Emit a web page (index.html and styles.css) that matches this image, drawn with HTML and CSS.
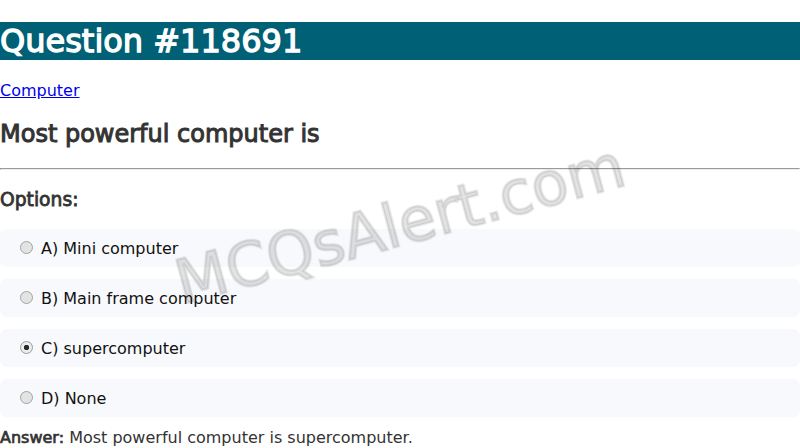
FILE: index.html
```html
<!DOCTYPE html>
<html lang="en">
<head>
<meta charset="utf-8">
<title>Question #118691</title>
<link rel="stylesheet" href="styles.css">
</head>
<body>
<h1 class="title">Question #118691</h1>
<p class="category"><a href="#">Computer</a></p>
<h2 class="question">Most powerful computer is</h2>
<hr class="divider">
<h3 class="options-title">Options:</h3>
<div class="options">
  <label class="option"><input class="radio" type="radio" name="opt" disabled><span>A) Mini computer</span></label>
  <label class="option"><input class="radio" type="radio" name="opt" disabled><span>B) Main frame computer</span></label>
  <label class="option"><input class="radio" type="radio" name="opt" checked disabled><span>C) supercomputer</span></label>
  <label class="option"><input class="radio" type="radio" name="opt" disabled><span>D) None</span></label>
</div>
<div class="answer"><span class="answer-label">Answer:</span> Most powerful computer is supercomputer.</div>
<div class="watermark">MCQsAlert.com</div>
</body>
</html>
```
FILE: styles.css
```css
html, body {
  margin: 0;
  padding: 0;
  background: #fff;
}
body {
  font-family: "DejaVu Sans", Verdana, sans-serif;
  font-size: 16px;
  color: #333;
  overflow: hidden;
}
.title {
  font-size: 32px;
  font-weight: normal;
  -webkit-text-stroke: 1.3px #fff;
  color: #fff;
  background: #006075;
  margin: 22px 0 21.44px;
}
.category {
  margin: 16px 0;
}
.category a {
  color: #0000ee;
}
.question {
  font-size: 24px;
  font-weight: normal;
  -webkit-text-stroke: 1px #333;
  color: #333;
  margin: 19.92px 0;
}
.divider {
  margin: 8px 0;
}
.options-title {
  font-size: 18.72px;
  font-weight: normal;
  -webkit-text-stroke: 0.8px #333;
  color: #333;
  margin: 18.72px 0;
}
.options {
  display: flex;
  flex-direction: column;
  gap: 12px;
}
.option {
  display: flex;
  align-items: center;
  box-sizing: border-box;
  height: 38px;
  background: #f8f9fc;
  border-radius: 7px;
  padding: 2px 15px 0;
  color: #111;
  line-height: 18px;
}
.radio {
  -webkit-appearance: none;
  appearance: none;
  box-sizing: border-box;
  flex: none;
  width: 13px;
  height: 13px;
  margin: 0 8px 2px 5px;
  border: 1px solid #a3a3a3;
  border-radius: 50%;
  background: #e3e3e3;
}
.radio:checked {
  background: radial-gradient(circle, #2a2a2a 0, #2a2a2a 2.4px, #ececec 3px);
  border-color: #9a9a9a;
}
.answer {
  margin-top: 11px;
  color: #333;
}
.answer-label {
  -webkit-text-stroke: 0.7px #333;
}
.watermark {
  position: fixed;
  left: 50%;
  top: 50%;
  transform: translate(-50%, -50%) rotate(-15deg);
  font-size: 60px;
  white-space: nowrap;
  color: rgba(0, 0, 0, 0.11);
  -webkit-text-stroke: 2.4px rgba(0, 0, 0, 0.11);
  pointer-events: none;
}
```
